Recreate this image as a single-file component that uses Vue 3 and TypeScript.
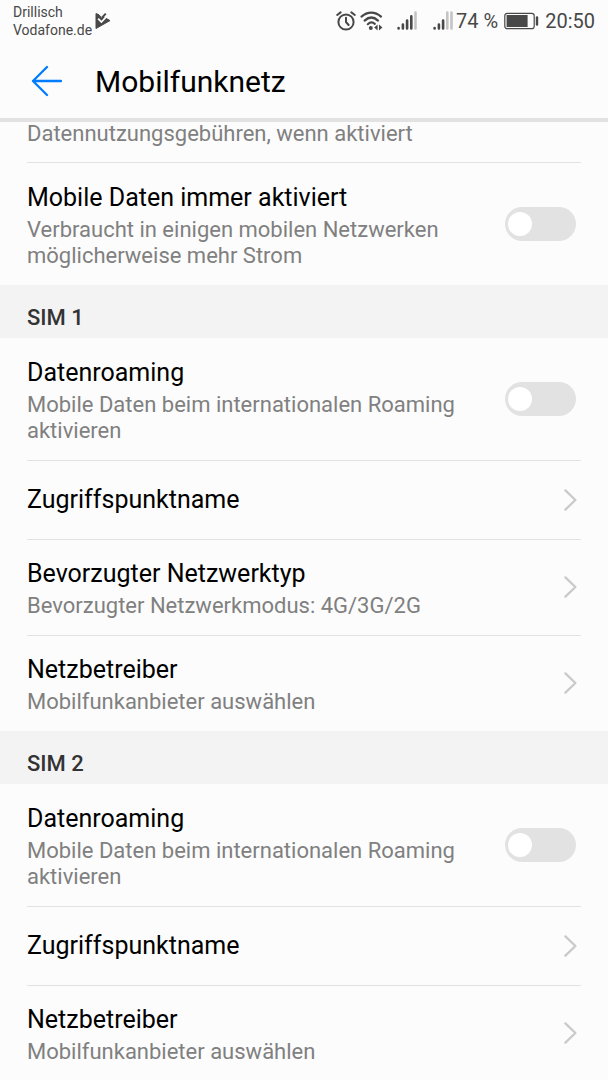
<script setup lang="ts">
import { reactive } from 'vue'

interface Item {
  id: string
  title: string
  summary?: string
  kind: 'switch' | 'link'
}
interface Section {
  heading?: string
  items: Item[]
}

const roaming = 'Mobile Daten beim internationalen Roaming aktivieren'

const sections: Section[] = [
  {
    items: [
      {
        id: 'always-on',
        title: 'Mobile Daten immer aktiviert',
        summary: 'Verbraucht in einigen mobilen Netzwerken möglicherweise mehr Strom',
        kind: 'switch',
      },
    ],
  },
  {
    heading: 'SIM 1',
    items: [
      { id: 'roaming-1', title: 'Datenroaming', summary: roaming, kind: 'switch' },
      { id: 'apn-1', title: 'Zugriffspunktname', kind: 'link' },
      {
        id: 'type-1',
        title: 'Bevorzugter Netzwerktyp',
        summary: 'Bevorzugter Netzwerkmodus: 4G/3G/2G',
        kind: 'link',
      },
      { id: 'operator-1', title: 'Netzbetreiber', summary: 'Mobilfunkanbieter auswählen', kind: 'link' },
    ],
  },
  {
    heading: 'SIM 2',
    items: [
      { id: 'roaming-2', title: 'Datenroaming', summary: roaming, kind: 'switch' },
      { id: 'apn-2', title: 'Zugriffspunktname', kind: 'link' },
      { id: 'operator-2', title: 'Netzbetreiber', summary: 'Mobilfunkanbieter auswählen', kind: 'link' },
    ],
  },
]

const enabled = reactive<Record<string, boolean>>({
  'always-on': false,
  'roaming-1': false,
  'roaming-2': false,
})
</script>

<template>
  <div class="screen">
    <div class="status">
      <div class="carriers">
        <span>Drillisch</span>
        <span>Vodafone.de</span>
      </div>
      <svg class="notice" width="16" height="18" viewBox="0 0 16 18" aria-hidden="true">
        <path d="M1 1.5 4 2.8 6.5 6 9.5 5.4 15 8.6 1 16.5z" fill="#484848" stroke="#484848" stroke-linejoin="round" />
        <path d="M3.2 6.6 6.4 10 12.6 3.4" fill="none" stroke="#fcfcfc" stroke-width="1.8" />
        <path d="M7 5.6 10.8 1.6" fill="none" stroke="#484848" stroke-width="2" />
      </svg>
      <div class="indicators">
        <svg class="alarm" width="20" height="20" viewBox="0 0 20 20" aria-hidden="true">
          <g fill="none" stroke="#484848" stroke-width="2" stroke-linecap="round" stroke-linejoin="round">
            <circle cx="10" cy="11" r="7.6" />
            <path d="M10 6.8V11l2.6 3M1.2 4 4.6 1.4M18.8 4 15.4 1.4" />
          </g>
        </svg>
        <svg class="wifi" width="24" height="20" viewBox="0 0 24 20" aria-hidden="true">
          <g fill="none" stroke="#484848" stroke-width="2.2" stroke-linecap="round">
            <path d="M1.5 5.6C7.5.2 15 .2 21 5.6" />
            <path d="M4.6 9.6C9 5.6 13.8 5.6 18 9.6" />
            <path d="M7.8 13.2C10.2 11 12.6 11 14.8 12.8" />
          </g>
          <circle cx="10.8" cy="17" r="2" fill="#484848" />
          <path d="M17.6 13.4v6l-3.4-3zM19 13.4v6l3.4-3z" fill="#484848" />
        </svg>
        <svg class="signal-one" width="20" height="20" viewBox="0 0 20 20" aria-hidden="true">
          <g fill="none" stroke="#484848" stroke-width="2.6" stroke-linecap="round">
            <path d="M1.6 17v.4M5.9 13.6v3.8M10.1 9.6v7.8M14.3 5.4v12" />
            <path d="M18.5 1.6v15.8" stroke="#c4c4c4" />
          </g>
        </svg>
        <svg class="signal-two" width="20" height="20" viewBox="0 0 20 20" aria-hidden="true">
          <g fill="none" stroke="#484848" stroke-width="2.6" stroke-linecap="round">
            <path d="M1.6 17v.4M5.9 13.6v3.8M10.1 9.6v7.8" />
            <path d="M14.3 1.6v15.8M18.5 1.6v15.8" stroke="#c4c4c4" />
          </g>
        </svg>
        <span class="percent">74 %</span>
        <svg class="battery" width="35" height="18" viewBox="0 0 35 18" aria-hidden="true">
          <rect x=".8" y="1.3" width="29.4" height="15.4" rx="2.5" fill="none" stroke="#484848" stroke-width="1.2" />
          <rect x="2.6" y="3" width="21" height="12" fill="#484848" />
          <path d="M33 5.5v7" stroke="#484848" stroke-width="2.4" stroke-linecap="round" />
        </svg>
        <time class="clock">20:50</time>
      </div>
    </div>

    <header class="bar">
      <button class="back" type="button" aria-label="Zurück">
        <svg width="32" height="32" viewBox="0 0 32 32" aria-hidden="true">
          <path d="M17 2 3 16l14 14M3 16h28" fill="none" stroke="#007dff" stroke-width="2.3" stroke-linecap="round" stroke-linejoin="round" />
        </svg>
      </button>
      <h1>Mobilfunknetz</h1>
    </header>

    <main>
      <p class="cut">Datennutzungsgebühren, wenn aktiviert</p>
      <section v-for="(section, index) in sections" :key="index">
        <h2 v-if="section.heading">{{ section.heading }}</h2>
        <ul>
          <li v-for="item in section.items" :key="item.id">
            <label v-if="item.kind === 'switch'" class="row toggle">
              <span class="text">
                <span class="title">{{ item.title }}</span>
                <span class="summary">{{ item.summary }}</span>
              </span>
              <input v-model="enabled[item.id]" class="switch" type="checkbox" role="switch" />
            </label>
            <button v-else class="row" type="button">
              <span class="text">
                <span class="title">{{ item.title }}</span>
                <span v-if="item.summary" class="summary">{{ item.summary }}</span>
              </span>
              <svg class="chevron" width="14" height="24" viewBox="0 0 14 24" aria-hidden="true">
                <path d="M2.4 2.4 12.4 12 2.4 21.6" fill="none" stroke="#cacaca" stroke-width="2.3" stroke-linecap="round" stroke-linejoin="round" />
              </svg>
            </button>
          </li>
        </ul>
      </section>
    </main>
  </div>
</template>

<style>
body {
  background: #fcfcfc;
}
</style>

<style scoped>
.screen {
  height: 100vh;
  display: flex;
  flex-direction: column;
  overflow: hidden;
  background: #fcfcfc;
  color: #000;
  font-family: Roboto, "Liberation Sans", sans-serif;
}
.status {
  flex: none;
  height: 42px;
  display: flex;
  align-items: center;
  padding: 0 13px;
  color: #484848;
}
.carriers {
  display: flex;
  flex-direction: column;
  font-size: 14px;
  line-height: 18px;
}
.notice {
  margin-left: 3px;
}
.indicators {
  margin-left: auto;
  display: flex;
  align-items: center;
  font-size: 20px;
  line-height: 24px;
}
.wifi {
  margin-left: 4px;
}
.signal-one {
  margin-left: 13px;
}
.signal-two {
  margin-left: 16px;
}
.percent {
  margin-left: 3px;
}
.battery {
  margin: 0 6px;
}
.bar {
  flex: none;
  height: 74px;
  display: flex;
  align-items: center;
  padding: 2px 30px 0;
  border-bottom: 4px solid #e2e2e2;
}
.back {
  display: flex;
  padding: 0;
  border: 0;
  background: none;
  cursor: pointer;
}
h1 {
  margin: 0 0 0 33px;
  padding-top: 2px;
  font-size: 30px;
  line-height: 40px;
  font-weight: 400;
}
main {
  flex: 1;
  min-height: 0;
  overflow: hidden;
}
.cut {
  margin: 0 27px;
  height: 40px;
  border-bottom: 1px solid #e2e2e2;
  line-height: 24px;
  font-size: 22px;
  color: #808080;
}
h2 {
  margin: 0;
  padding: 13px 27px 0;
  background: #f3f3f3;
  font-size: 22px;
  line-height: 40px;
  font-weight: 500;
  color: #333;
}
ul {
  margin: 0;
  padding: 0 27px;
  list-style: none;
}
li + li {
  border-top: 1px solid #e2e2e2;
}
.row {
  box-sizing: border-box;
  width: 100%;
  min-height: 78px;
  display: flex;
  align-items: center;
  justify-content: space-between;
  gap: 32px;
  padding: 15px 4px 16px 0;
  border: 0;
  background: none;
  color: inherit;
  font: inherit;
  text-align: left;
  cursor: pointer;
}
.toggle {
  padding: 16px 5px 16px 0;
}
.text {
  display: flex;
  flex-direction: column;
}
.title {
  font-size: 25px;
  line-height: 38px;
}
.summary {
  font-size: 22px;
  line-height: 26px;
  color: #808080;
}
.chevron {
  flex: none;
}
.switch {
  flex: none;
  appearance: none;
  box-sizing: border-box;
  width: 71px;
  height: 34px;
  margin: 0;
  padding: 5px 3px;
  border-radius: 17px;
  background: #e2e2e2;
  cursor: pointer;
}
.switch::before {
  content: "";
  display: block;
  width: 24px;
  height: 24px;
  border-radius: 50%;
  background: #fff;
}
.switch:checked {
  padding-left: 44px;
  background: #007dff;
}
</style>
